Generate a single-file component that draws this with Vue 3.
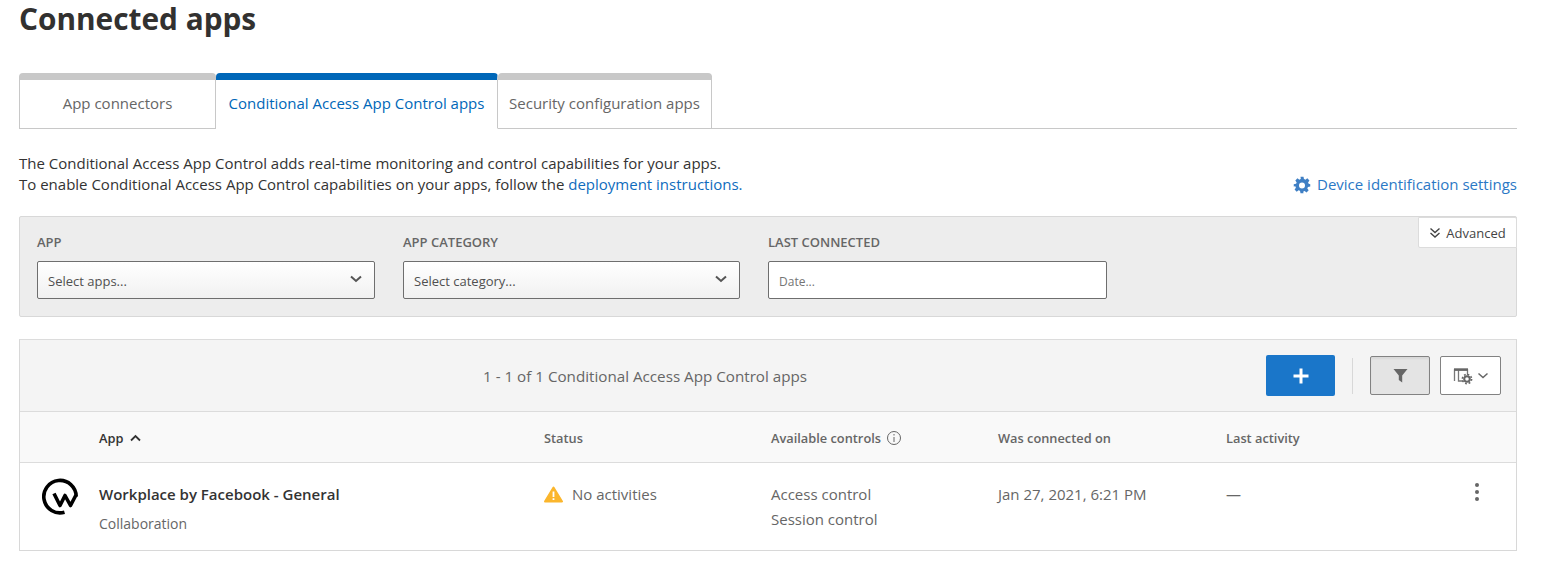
<script setup>
import { ref } from "vue"

const tabs = ref([
  { id: 1, label: "App connectors", width: 197 },
  { id: 2, label: "Conditional Access App Control apps", width: 282, active: true },
  { id: 3, label: "Security configuration apps", width: 214 },
])

const filters = ref([
  { label: "APP", placeholder: "Select apps...", width: 338, select: true },
  { label: "APP CATEGORY", placeholder: "Select category...", width: 337, select: true },
  { label: "LAST CONNECTED", placeholder: "Date...", width: 339, select: false },
])
</script>

<template>
  <div class="page">
    <h1 class="title">Connected apps</h1>

    <div class="tabs">
      <div
        v-for="tab in tabs"
        :key="tab.id"
        class="tab"
        :class="{ active: tab.active }"
        :style="{ width: tab.width + 'px' }"
      >
        {{ tab.label }}
      </div>
    </div>

    <div class="intro">
      <p>
        The Conditional Access App Control adds real-time monitoring and control capabilities for your apps.<br />
        To enable Conditional Access App Control capabilities on your apps, follow the
        <a class="link">deployment instructions.</a>
      </p>
      <a class="link device">
        <svg width="18" height="18" viewBox="0 0 24 24" class="gear">
          <path
            fill="#3f7fc4"
            fill-rule="evenodd"
            d="M10 1h4l.6 3.1c.7.2 1.3.5 1.9.8l2.600-1.800 2.800 2.800-1.800 2.600c.3.6.6 1.200.8 1.900L23 11v3l-3.100.6c-.2.7-.5 1.300-.8 1.900l1.800 2.600-2.800 2.800-2.600-1.800c-.6.3-1.200.6-1.900.8L14 23h-4l-.6-3.100c-.7-.2-1.300-.5-1.900-.8l-2.600 1.800-2.800-2.800 1.800-2.600c-.3-.6-.6-1.200-.8-1.900L1 14v-3l3.100-.6c.2-.7.5-1.300.8-1.900L3.100 5.900l2.800-2.800 2.600 1.800c.6-.3 1.200-.6 1.900-.8L10 1zm2 7.500a4 4 0 1 0 0 8 4 4 0 0 0 0-8z"
          />
        </svg>
        Device identification settings
      </a>
    </div>

    <div class="filters">
      <div v-for="f in filters" :key="f.label" class="filter" :style="{ width: f.width + 'px' }">
        <label>{{ f.label }}</label>
        <div class="field" :class="{ select: f.select }">
          <span>{{ f.placeholder }}</span>
          <svg v-if="f.select" width="12" height="8" viewBox="0 0 12 8">
            <path d="M1 1.500l5 4.500 5-4.500" fill="none" stroke="#555" stroke-width="2" />
          </svg>
        </div>
      </div>
      <div class="advanced">
        <svg width="12" height="12" viewBox="0 0 12 12">
          <path d="M1.500 1.500L6 5.500l4.500-4M1.500 6L6 10l4.500-4" fill="none" stroke="#444" stroke-width="1.400" />
        </svg>
        Advanced
      </div>
    </div>

    <div class="panel">
      <div class="toolbar">
        <div class="count">1 - 1 of 1 Conditional Access App Control apps</div>
        <div class="actions">
          <button class="btn-add">
            <svg width="18" height="18" viewBox="0 0 18 18">
              <path d="M9 1.500v15M1.500 9h15" stroke="#fff" stroke-width="3" />
            </svg>
          </button>
          <span class="divider"></span>
          <button class="btn-tool pressed">
            <svg width="15" height="15" viewBox="0 0 15 15">
              <path d="M0.500 1h14L9.200 7.600V14.500L5.800 12V7.600z" fill="#666" />
            </svg>
          </button>
          <button class="btn-tool wide">
            <svg width="36" height="18" viewBox="0 0 36 18">
              <path d="M1.500 14V3h13v5M5.500 3v11H10" fill="none" stroke="#777" stroke-width="1.300" />
              <path d="M1 2.500h14" stroke="#666" stroke-width="2.400" />
              <circle cx="14" cy="12" r="2.800" fill="none" stroke="#666" stroke-width="2" />
              <circle cx="14" cy="12" r="4.600" fill="none" stroke="#666" stroke-width="1.600" stroke-dasharray="1.800 1.800" />
              <path d="M25.500 6.500l4.500 4 4.500-4" fill="none" stroke="#666" stroke-width="1.500" />
            </svg>
          </button>
        </div>
      </div>

      <div class="row head">
        <div class="c-app app-head">
          App
          <svg width="11" height="8" viewBox="0 0 11 8">
            <path d="M1 6.500l4.500-4.500L10 6.500" fill="none" stroke="#333" stroke-width="1.800" />
          </svg>
        </div>
        <div class="c-status">Status</div>
        <div class="c-controls">
          Available controls
          <svg width="16" height="16" viewBox="0 0 16 16" class="info">
            <circle cx="8" cy="8" r="6.500" fill="none" stroke="#666" />
            <path d="M8 7v5M8 4v1.500" stroke="#666" />
          </svg>
        </div>
        <div class="c-date">Was connected on</div>
        <div class="c-last">Last activity</div>
      </div>

      <div class="row body">
        <div class="c-logo">
          <svg width="38" height="38" viewBox="0 0 38 38">
            <path d="M23.500 34.200A16.200 16.200 0 1 1 35.200 18.500" fill="none" stroke="#000" stroke-width="3.600" />
            <path
              d="M13 15.500L19 27.500 24 17.500 29.500 27.500 35 17"
              fill="none"
              stroke="#000"
              stroke-width="3.600"
              stroke-linejoin="round"
            />
          </svg>
        </div>
        <div class="c-app">
          <div class="name">Workplace by Facebook - General</div>
          <div class="sub">Collaboration</div>
        </div>
        <div class="c-status status-cell">
          <svg width="19" height="17" viewBox="0 0 19 17" class="warn">
            <path d="M9.500 1.500L18 15.500H1z" fill="#fbb62c" stroke="#fbb62c" stroke-width="2" stroke-linejoin="round" />
            <path d="M9.500 5.500v5.500M9.500 12.200v1.800" stroke="#fff" stroke-width="1.800" />
          </svg>
          No activities
        </div>
        <div class="c-controls">
          <div>Access control</div>
          <div class="second">Session control</div>
        </div>
        <div class="c-date">Jan 27, 2021, 6:21 PM</div>
        <div class="c-last">—</div>
        <div class="kebab"><i></i><i></i><i></i></div>
      </div>
    </div>
  </div>
</template>

<style>
body {
  background: #fff;
  overflow: hidden;
}
</style>

<style scoped>
.page {
  width: 1498px;
  margin-left: 19px;
  font-family: "Open Sans", "Noto Sans", sans-serif;
  font-size: 15px;
  color: #333;
}

.title {
  margin: 0;
  height: 73px;
  font-size: 29.800px;
  font-weight: 700;
  line-height: 38px;
  color: #323130;
}

.tabs {
  display: flex;
  height: 56px;
  border-bottom: 1px solid #c8c8c8;
  box-sizing: border-box;
}

.tab {
  box-sizing: border-box;
  height: 56px;
  padding-bottom: 2px;
  border: 1px solid #c8c8c8;
  border-top: 7px solid #c8c8c8;
  border-radius: 4px 4px 0 0;
  display: flex;
  align-items: center;
  justify-content: center;
  font-size: 15px;
  color: #666;
  background: #fff;
}

.tab + .tab {
  border-left: none;
}

.tab.active {
  border-top-color: #0067b8;
  border-bottom-color: #fff;
  color: #0067b8;
}

.intro {
  display: flex;
  justify-content: space-between;
  align-items: flex-end;
  margin-top: 24px;
  line-height: 21px;
}

.intro p {
  margin: 0;
  font-size: 15px;
  color: #333;
}

.link {
  color: #0f6cbd;
}

.device {
  display: flex;
  align-items: center;
  gap: 6px;
  font-size: 15px;
  color: #2b78c5;
}

.filters {
  position: relative;
  display: flex;
  gap: 28px;
  height: 101px;
  box-sizing: border-box;
  margin-top: 21px;
  padding: 16px 17px 0;
  background: #ededed;
  border: 1px solid #d8d8d8;
  border-radius: 2px;
}

.filter label {
  display: block;
  height: 28px;
  font-size: 13px;
  line-height: 18px;
  font-weight: 600;
  color: #666;
}

.field {
  box-sizing: border-box;
  height: 38px;
  padding: 2px 12px 0 10px;
  display: flex;
  align-items: center;
  justify-content: space-between;
  border: 1px solid #6e6e6e;
  border-radius: 2px;
  background: #fff;
  font-size: 12px;
  color: #757575;
}

.field svg {
  margin-top: -4px;
}

.field.select {
  background: linear-gradient(#fff, #f1f1f1);
  color: #505050;
  font-size: 13px;
}

.advanced {
  position: absolute;
  top: 0;
  right: -1px;
  width: 99px;
  height: 31px;
  box-sizing: border-box;
  padding-top: 1px;
  display: flex;
  align-items: center;
  justify-content: center;
  gap: 5px;
  background: #fff;
  border: 1px solid #dcdcdc;
  border-radius: 0 2px 0 2px;
  font-size: 13px;
  color: #444;
}

.panel {
  margin-top: 22px;
  border: 1px solid #d8d8d8;
  border-top-color: #dcdcdc;
}

.toolbar {
  position: relative;
  height: 71px;
  display: flex;
  align-items: center;
  justify-content: flex-end;
  background: #f4f4f4;
  border-bottom: 1px solid #dcdcdc;
}

.count {
  position: absolute;
  left: 463px;
  font-size: 15.200px;
  color: #666;
}

.actions {
  display: flex;
  align-items: center;
  margin-right: 15px;
}

.btn-add {
  width: 69px;
  height: 41px;
  border: none;
  border-radius: 2px;
  background: #1a76c9;
  display: flex;
  align-items: center;
  justify-content: center;
  padding: 0;
}

.divider {
  width: 1px;
  height: 36px;
  margin: 0 17px;
  background: #d8d8d8;
}

.btn-tool {
  width: 60px;
  height: 39px;
  padding: 0;
  margin-right: 10px;
  background: #fff;
  border: 1px solid #828282;
  border-radius: 2px;
  display: flex;
  align-items: center;
  justify-content: center;
}

.btn-tool.wide {
  width: 61px;
  margin-right: 0;
}

.btn-tool.pressed {
  background: #e4e4e4;
  box-shadow: inset 0 2px 2px rgba(0, 0, 0, 0.05);
}

.row {
  display: grid;
  grid-template-columns: 79px 445px 227px 227px 228px 1fr;
}

.head {
  height: 50px;
  box-sizing: content-box;
  align-items: center;
  background: #f9f9f9;
  border-bottom: 1px solid #dcdcdc;
  font-size: 12.800px;
  font-weight: 600;
  color: #666;
}

.head > div {
  padding-top: 2px;
}

.head > :first-child {
  grid-column: 2;
}

.app-head {
  color: #333;
  display: flex;
  align-items: center;
  gap: 7px;
}

.info {
  vertical-align: -3px;
  margin-left: 2px;
}

.body {
  position: relative;
  height: 87px;
  background: #fff;
  font-size: 15px;
  color: #666;
}

.c-logo {
  padding: 15px 0 0 21px;
}

.c-app .name {
  margin-top: 21px;
  font-size: 15px;
  font-weight: 600;
  color: #333;
}

.sub {
  margin-top: 10px;
  font-size: 14px;
  color: #666;
}

.body .c-status,
.body .c-controls,
.body .c-date,
.body .c-last {
  padding-top: 21px;
}

.status-cell {
  display: flex;
  align-items: flex-start;
  gap: 9px;
}

.warn {
  margin-top: 2px;
}

.second {
  margin-top: 5px;
}

.kebab {
  position: absolute;
  right: 37px;
  top: 20px;
  display: flex;
  flex-direction: column;
  gap: 3px;
}

.kebab i {
  display: block;
  width: 4px;
  height: 4px;
  border-radius: 50%;
  background: #666;
}
</style>
